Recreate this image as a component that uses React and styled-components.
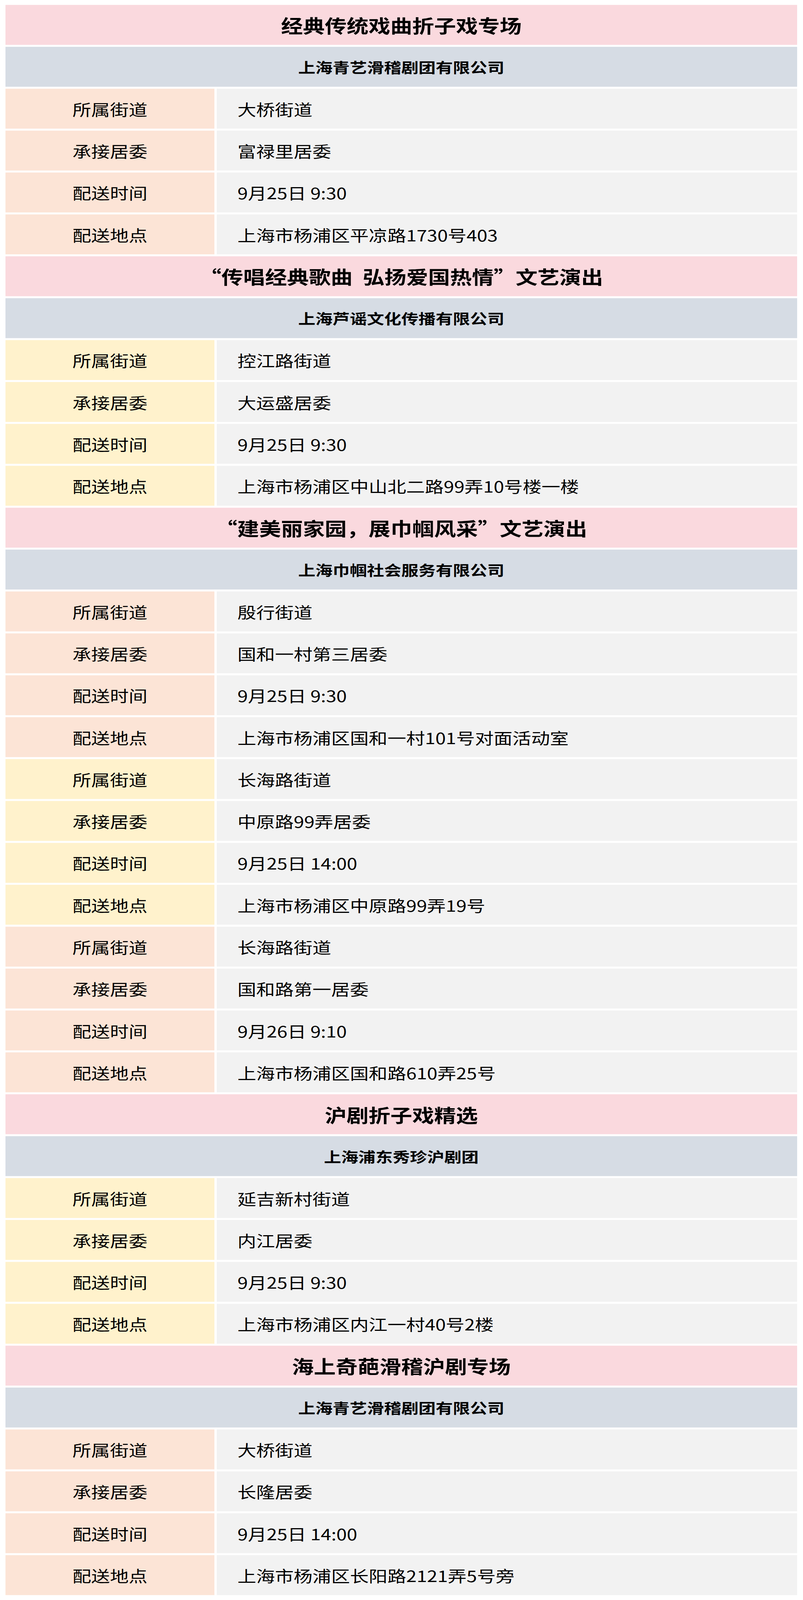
import React, { useLayoutEffect, useState } from "react";
import styled, { createGlobalStyle } from "styled-components";

const Colors = {
  pink: "#FAD9DE",
  slate: "#D6DCE4",
  peach: "#FCE4D6",
  yellow: "#FFF2CC",
  cell: "#F2F2F2",
  ink: "#000000",
};

// 原稿的高度
const DESIGN_HEIGHT = 4888;

const GlobalStyle = createGlobalStyle`
  html, body {
    margin: 0;
    padding: 0;
    background: #ffffff;
  }
  body {
    font-family: "Noto Sans CJK SC", "Noto Sans", sans-serif;
    color: ${Colors.ink};
  }
`;

// 每场演出：标题、承办单位、配送明细
const shows = [
  {
    title: "经典传统戏曲折子戏专场",
    company: "上海青艺滑稽剧团有限公司",
    stops: [
      { tone: "peach", street: "大桥街道", committee: "富禄里居委", time: "9月25日 9:30", place: "上海市杨浦区平凉路1730号403" },
    ],
  },
  {
    title: "“传唱经典歌曲  弘扬爱国热情”文艺演出",
    company: "上海芦谣文化传播有限公司",
    stops: [
      { tone: "yellow", street: "控江路街道", committee: "大运盛居委", time: "9月25日 9:30", place: "上海市杨浦区中山北二路99弄10号楼一楼" },
    ],
  },
  {
    title: "“建美丽家园，展巾帼风采”文艺演出",
    company: "上海巾帼社会服务有限公司",
    stops: [
      { tone: "peach", street: "殷行街道", committee: "国和一村第三居委", time: "9月25日 9:30", place: "上海市杨浦区国和一村101号对面活动室" },
      { tone: "yellow", street: "长海路街道", committee: "中原路99弄居委", time: "9月25日 14:00", place: "上海市杨浦区中原路99弄19号" },
      { tone: "peach", street: "长海路街道", committee: "国和路第一居委", time: "9月26日 9:10", place: "上海市杨浦区国和路610弄25号" },
    ],
  },
  {
    title: "沪剧折子戏精选",
    company: "上海浦东秀珍沪剧团",
    stops: [
      { tone: "yellow", street: "延吉新村街道", committee: "内江居委", time: "9月25日 9:30", place: "上海市杨浦区内江一村40号2楼" },
    ],
  },
  {
    title: "海上奇葩滑稽沪剧专场",
    company: "上海青艺滑稽剧团有限公司",
    stops: [
      { tone: "peach", street: "大桥街道", committee: "长隆居委", time: "9月25日 14:00", place: "上海市杨浦区长阳路2121弄5号旁" },
    ],
  },
];

const Frame = styled.div`
  width: 100%;
  overflow: hidden;
`;

const Page = styled.div`
  box-sizing: border-box;
  width: 100%;
  height: ${DESIGN_HEIGHT}px;
  padding: 15px 15px 15px 14px;
  transform-origin: top left;
`;

const Table = styled.div`
  display: flex;
  flex-direction: column;
  gap: 6px;
`;

const Bar = styled.div`
  height: 122px;
  display: flex;
  align-items: center;
  justify-content: center;
  font-weight: 700;
  white-space: pre;
  line-height: 1;
`;

const TitleBar = styled(Bar)`
  background: ${Colors.pink};
  font-size: 56px;
`;

const CompanyBar = styled(Bar)`
  background: ${Colors.slate};
  font-size: 44px;
`;

const Row = styled.div`
  display: grid;
  grid-template-columns: 535px 1fr;
  gap: 6px;
  height: 122px;
`;

const Label = styled.div`
  background: ${(p) => Colors[p.$tone]};
  display: flex;
  align-items: center;
  justify-content: center;
  font-size: 48px;
  line-height: 1;
`;

const Value = styled.div`
  background: ${Colors.cell};
  display: flex;
  align-items: center;
  padding-left: 53px;
  font-size: 48px;
  line-height: 1;
`;

const fields = [
  ["所属街道", "street"],
  ["承接居委", "committee"],
  ["配送时间", "time"],
  ["配送地点", "place"],
];

export default function App() {
  // 视口比原稿矮时，整张表按高度收进视口
  const [fit, setFit] = useState(1);
  useLayoutEffect(() => {
    const update = () => setFit(Math.min(1, window.innerHeight / DESIGN_HEIGHT));
    update();
    window.addEventListener("resize", update);
    return () => window.removeEventListener("resize", update);
  }, []);

  return (
    <Frame style={{ height: `${DESIGN_HEIGHT * fit}px` }}>
      <GlobalStyle />
      <Page style={{ transform: `scaleY(${fit})` }}>
        <Table>
          {shows.map((show, i) => (
            <React.Fragment key={i}>
              <TitleBar>{show.title}</TitleBar>
              <CompanyBar>{show.company}</CompanyBar>
              {show.stops.map((stop, j) =>
                fields.map(([label, key]) => (
                  <Row key={`${j}-${key}`}>
                    <Label $tone={stop.tone}>{label}</Label>
                    <Value>{stop[key]}</Value>
                  </Row>
                ))
              )}
            </React.Fragment>
          ))}
        </Table>
      </Page>
    </Frame>
  );
}
